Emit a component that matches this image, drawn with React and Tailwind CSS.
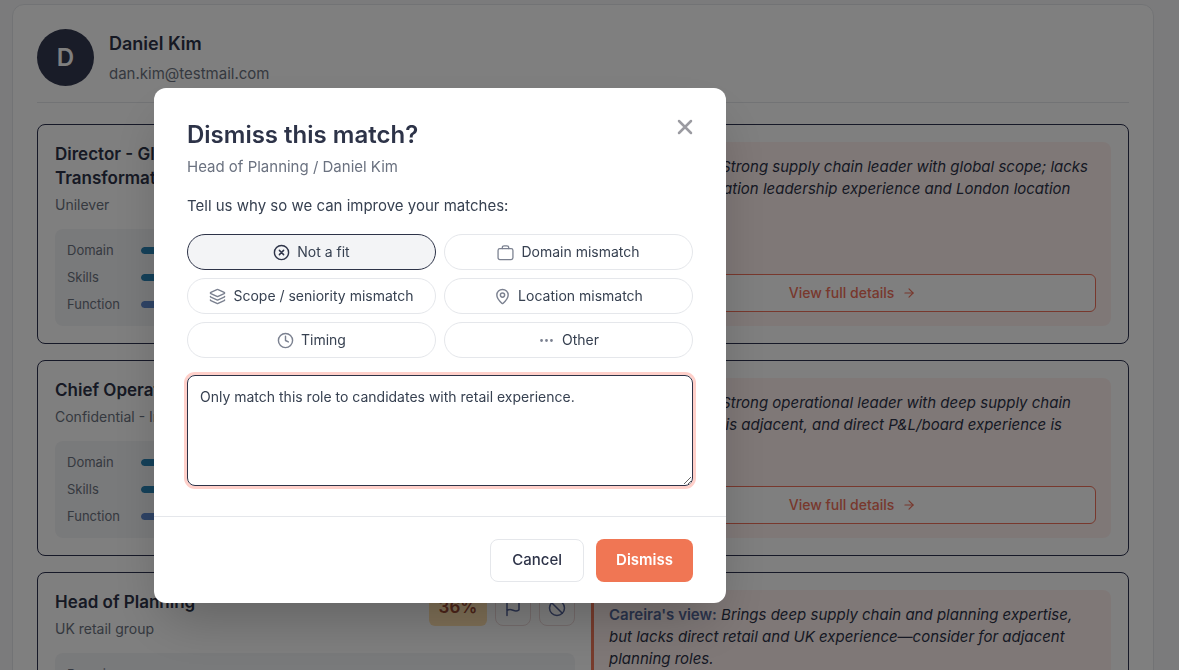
import { useState } from 'react'
import { ArrowRight, Ban, Clock, Ellipsis, Flag, Layers, MapPin } from 'lucide-react'

const matches = [
  {
    id: 1,
    title: 'Director - Global Supply Chain Transformation',
    company: 'Unilever',
    score: '62%',
    view: 'Strong supply chain leader with global scope; lacks direct transformation leadership experience and London location',
  },
  {
    id: 2,
    title: 'Chief Operating Officer',
    company: 'Confidential - Industrial group',
    score: '48%',
    view: 'Strong operational leader with deep supply chain skills; C-level fit is adjacent, and direct P&L/board experience is limited.',
  },
  {
    id: 3,
    title: 'Head of Planning',
    company: 'UK retail group',
    score: '36%',
    view: 'Brings deep supply chain and planning expertise, but lacks direct retail and UK experience—consider for adjacent planning roles.',
  },
]

const scores = [
  { label: 'Domain', value: 82, color: 'bg-[#2a83b4]' },
  { label: 'Skills', value: 78, color: 'bg-[#2a83b4]' },
  { label: 'Function', value: 64, color: 'bg-[#5f88cc]' },
]

const CircleX = ({ className }) => (
  <svg viewBox="0 0 24 24" fill="none" stroke="currentColor" strokeWidth="2" strokeLinecap="round" className={className}>
    <circle cx="12" cy="12" r="10" />
    <path d="M9 9l6 6M15 9l-6 6" />
  </svg>
)

const Bag = ({ className }) => (
  <svg viewBox="0 0 24 24" fill="none" stroke="currentColor" strokeWidth="1.8" strokeLinecap="round" strokeLinejoin="round" className={className}>
    <rect x="1.5" y="6.5" width="21" height="15.5" rx="2.5" />
    <path d="M7.5 6.5V5a2.5 2.5 0 0 1 2.5-2.5h4A2.5 2.5 0 0 1 16.500 5v1.500" />
  </svg>
)

const reasons = [
  { label: 'Not a fit', icon: CircleX },
  { label: 'Domain mismatch', icon: Bag },
  { label: 'Scope / seniority mismatch', icon: Layers },
  { label: 'Location mismatch', icon: MapPin },
  { label: 'Timing', icon: Clock },
  { label: 'Other', icon: Ellipsis },
]

const MatchCard = ({ match }) => (
  <article className="grid grid-cols-2 gap-4 rounded-lg border border-[#2d3250] p-[17px]">
    <div className="flex flex-col">
      <div className="flex items-start justify-between gap-4">
        <div>
          <h3 className="text-[17px] leading-6 font-semibold text-[#2d3348]">{match.title}</h3>
          <p className="mt-1 text-sm leading-[22px] text-[#6b7280]">{match.company}</p>
        </div>
        <div className="flex shrink-0 items-center gap-2">
          <span className="flex h-9 w-[58px] items-center justify-center rounded-md bg-[#ffe0ae] text-[17px] font-semibold text-[#9a4a34]">
            {match.score}
          </span>
          <button type="button" aria-label="Flag match" className="flex size-9 items-center justify-center rounded-lg border border-[#ecd9d9] text-[#56659a]">
            <Flag className="size-[18px]" />
          </button>
          <button type="button" aria-label="Dismiss match" className="flex size-9 items-center justify-center rounded-lg border border-[#ecd9d9] text-[#56659a]">
            <Ban className="size-[18px]" />
          </button>
        </div>
      </div>
      <ul className="mt-[13px] flex flex-col gap-2 rounded-lg bg-[#f3f4f6] p-3">
        {scores.map((s) => (
          <li key={s.label} className="flex items-center text-[13px] leading-[19px] text-[#6b7280]">
            <span className="w-[74px]">{s.label}</span>
            <span className="h-[7px] flex-1 overflow-hidden rounded-full bg-[#e5e7eb]">
              <span className={`block h-full rounded-full ${s.color}`} style={{ width: `${s.value}%` }} />
            </span>
          </li>
        ))}
      </ul>
    </div>

    <div className="flex flex-col justify-between gap-7 rounded-lg border-l-3 border-[#f0785a] bg-[#fff1ef] px-[15px] py-[14px]">
      <p className="text-[15px] leading-[22px] text-[#2d3348] italic">
        <strong className="font-semibold text-[#56699a] not-italic">Careira's view:</strong> {match.view}
      </p>
      <a href="#details" className="flex h-[38px] shrink-0 items-center justify-center gap-2 rounded-md border border-[#f0705a] bg-white text-sm font-medium text-[#f0705a]">
        View full details
        <ArrowRight className="size-[14px]" />
      </a>
    </div>
  </article>
)

const DismissModal = () => {
  const [selected, setSelected] = useState('Not a fit')
  const [note, setNote] = useState('Only match this role to candidates with retail experience.')

  return (
    <div className="fixed inset-0 z-10 bg-black/50 pt-22 pl-[154px]">
      <div role="dialog" aria-modal="true" aria-labelledby="dismiss-title" className="max-w-[572px] rounded-xl bg-white shadow-2xl">
        <div className="px-[33px] pt-[31px] pb-[30px]">
          <div className="flex items-start justify-between">
            <h2 id="dismiss-title" className="text-2xl font-semibold text-[#2d3348]">Dismiss this match?</h2>
            <button type="button" aria-label="Close" className="-mr-2 -mt-2 flex size-4 items-center justify-center p-4 text-[#9b9ba1]">
              <svg viewBox="0 0 16 16" fill="none" stroke="currentColor" strokeWidth="2.5" strokeLinecap="round" className="size-4 shrink-0">
                <path d="M2 2l12 12M14 2L2 14" />
              </svg>
            </button>
          </div>
          <p className="mt-1 text-[15px] leading-6 text-[#6b7280]">Head of Planning / Daniel Kim</p>
          <p className="mt-[15px] text-[15px] leading-6 text-[#374151]">Tell us why so we can improve your matches:</p>

          <div className="mt-4 grid grid-cols-2 gap-2">
            {reasons.map(({ label, icon: Icon }) => (
              <button
                key={label}
                type="button"
                aria-pressed={selected === label}
                onClick={() => setSelected(label)}
                className={`flex h-9 items-center justify-center gap-[7px] rounded-full border text-sm text-[#374151] ${
                  selected === label ? 'border-[#2d3348] bg-[#f3f4f6]' : 'border-[#e5e7eb] bg-white'
                }`}
              >
                <Icon strokeWidth={2} className={selected === label ? 'size-[17px] text-[#2d3348]' : 'size-[17px] text-[#7b8190]'} />
                {label}
              </button>
            ))}
          </div>

          <textarea
            aria-label="Feedback"
            value={note}
            onChange={(e) => setNote(e.target.value)}
            className="mt-[17px] block h-[111px] w-full rounded-lg border border-[#2d3348] px-3 py-[10px] text-sm leading-[21px] text-[#374151] ring-3 ring-[#ffd0ca] outline-none"
          />
        </div>

        <div className="flex justify-end gap-3 border-t border-[#e5e7eb] px-[33px] pt-[22px] pb-[21px]">
          <button type="button" className="h-[43px] rounded-lg border border-[#e5e7eb] px-[21px] text-[15px] font-medium text-[#2d3348]">Cancel</button>
          <button type="button" className="h-[43px] rounded-lg bg-[#f07654] px-5 text-[15px] font-semibold text-white">Dismiss</button>
        </div>
      </div>
    </div>
  )
}

const App = () => (
  <div className="h-screen overflow-hidden bg-[#f6f7f9] pt-1 pr-[25px] pl-3 font-['Inter',sans-serif]">
    <main className="rounded-xl border border-[#e5e7eb] bg-white p-6">
      <header className="flex items-center gap-[15px] border-b border-[#e5e7eb] pb-4">
        <div className="flex size-[57px] items-center justify-center rounded-full bg-[#333850] text-2xl font-semibold text-white">D</div>
        <div>
          <h1 className="text-lg leading-7 font-semibold text-[#2d3348]">Daniel Kim</h1>
          <p className="mt-1 text-[15px] leading-6 text-[#6b7280]">dan.kim@testmail.com</p>
        </div>
      </header>
      <div className="mt-[21px] flex flex-col gap-4">
        {matches.map((match) => (
          <MatchCard key={match.id} match={match} />
        ))}
      </div>
    </main>
    <DismissModal />
  </div>
)

export default App
